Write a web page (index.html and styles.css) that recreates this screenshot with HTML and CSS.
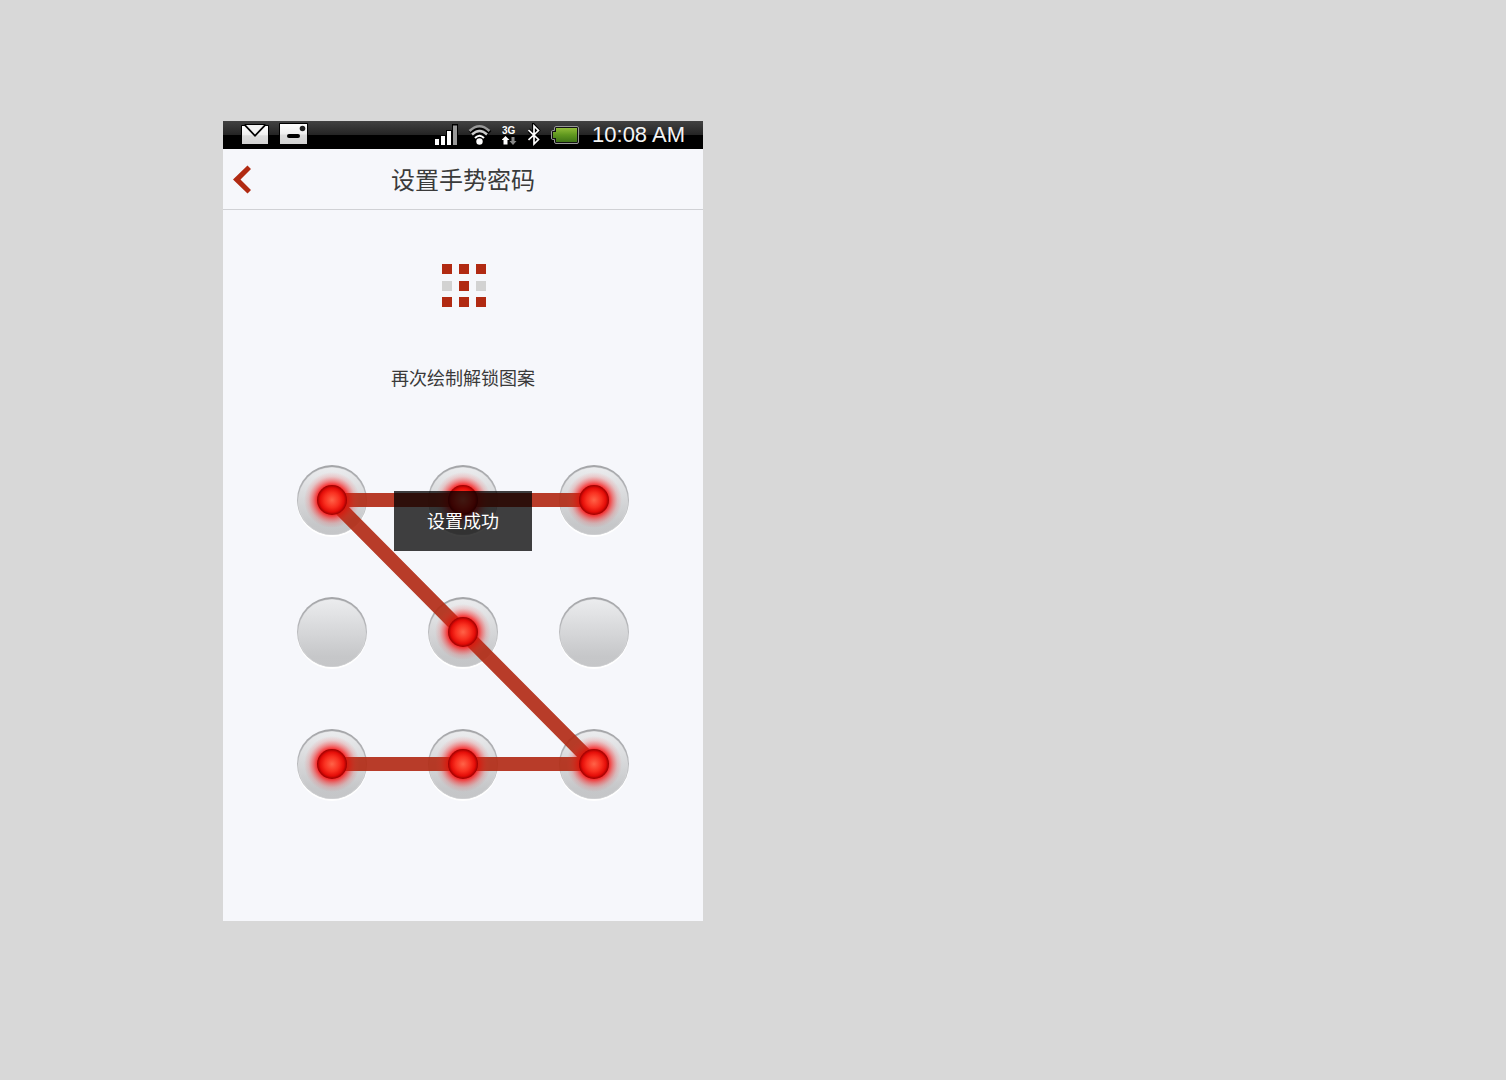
FILE: index.html
```html
<!DOCTYPE html>
<html lang="zh-CN">
<head>
<meta charset="utf-8">
<meta name="viewport" content="width=device-width, initial-scale=1">
<title>设置手势密码</title>
<link rel="stylesheet" href="styles.css">
</head>
<body>
<div class="phone">
  <div class="status">
    <div class="status-group status-left">
      <svg width="28" height="22" viewBox="0 0 28 22" aria-hidden="true">
        <defs>
          <linearGradient id="paper" x1="0" y1="0" x2="0" y2="1">
            <stop offset="0" stop-color="#fff"/><stop offset=".52" stop-color="#eee"/>
            <stop offset=".53" stop-color="#ddd"/><stop offset="1" stop-color="#d2d2d2"/>
          </linearGradient>
        </defs>
        <rect x="0" y="2" width="28" height="20" rx="1" fill="#000"/>
        <rect x="1" y="3" width="26" height="18" fill="url(#paper)"/>
        <path d="M3.500 1H24.500V3L14 14L3.500 3Z" fill="#000"/>
        <path d="M5 2H23L14 11.500Z" fill="#f4f4f4"/>
      </svg>
      <svg width="29" height="22" viewBox="0 0 29 22" aria-hidden="true">
        <rect width="29" height="22" rx="1" fill="#000"/>
        <rect x="1" y="1" width="27" height="20" fill="url(#paper)"/>
        <rect x="8" y="11" width="13" height="4" rx="2" fill="#000"/>
        <circle cx="23.500" cy="5.500" r="2.800" fill="#222"/>
      </svg>
    </div>
    <div class="status-group">
      <svg width="24" height="22" viewBox="0 0 24 22" aria-hidden="true">
        <path d="M0 14H6V11H12V6H18V0H24V22H0Z" fill="#000"/>
        <path d="M1 15H5V21H1ZM7 12H11V21H7ZM13 7H17V21H13Z" fill="#fff"/>
        <path d="M19 1.500H23V21H19Z" fill="#999"/>
      </svg>
      <svg class="wifi" width="24" height="22" viewBox="0 0 24 22" fill="none" aria-hidden="true">
        <path d="M2 8.500Q12 -1.500 22 8.500M5 12Q12 4.500 19 12M8 15Q12 11 16 15" stroke="#000" stroke-width="4"/>
        <path d="M1.500 7Q11.500 -2.500 21.500 7" stroke="#999" stroke-width="2.500"/>
        <path d="M4 10.500Q11.500 3.500 19 10.500" stroke="#ccc" stroke-width="2.400"/>
        <path d="M7 14Q11.500 9.500 16 14" stroke="#fff" stroke-width="2"/>
        <circle cx="11.500" cy="17.500" r="3.200" fill="#fff"/>
      </svg>
      <svg class="mobile-data" width="16" height="22" viewBox="0 0 16 22" role="img" aria-label="3G">
        <text class="network" x="0" y="10">3G</text>
        <path d="M3.500 12L7.500 16H5.500V20.500H1.500V16H-.5Z" fill="#fff"/>
        <path d="M9.500 13H12.500V17H14.500L11 21L7.500 17H9.500Z" fill="#888"/>
      </svg>
      <svg class="bluetooth" width="13" height="24" viewBox="1 0 13 24" fill="none" aria-hidden="true">
        <path d="M1.500 7L11 16.500L7 21V3L11 7.500L1.500 17" stroke="#000" stroke-width="4"/>
        <path d="M1.500 7L11.500 16.500L7 21V3L11.500 7.500L1.500 17" stroke="#fff" stroke-width="1.700"/>
      </svg>
      <svg class="battery" width="29" height="20" viewBox="0 0 29 20" aria-hidden="true">
        <defs>
          <linearGradient id="charge" x1="0" y1="0" x2="0" y2="1">
            <stop offset="0" stop-color="#90bc38"/><stop offset=".5" stop-color="#5f971f"/><stop offset="1" stop-color="#3f7416"/>
          </linearGradient>
        </defs>
        <path d="M5 1.500H26Q27.500 1.500 27.500 3V17Q27.500 18.500 26 18.500H5Q3.500 18.500 3.500 17V14.500H1.500Q.5 14.500 .5 13V7Q.5 5.500 1.500 5.500H3.500V3Q3.500 1.500 5 1.500Z" fill="#111" stroke="#999"/>
        <path d="M5 3H26V17H5V13H2V7H5Z" fill="url(#charge)"/>
      </svg>
      <time class="clock">10:08 AM</time>
    </div>
  </div>

  <header class="header">
    <button class="back" type="button" aria-label="返回">
      <svg width="18" height="30" viewBox="0 0 18 30" aria-hidden="true">
        <path d="M14.500 .5L18 4L7.500 14.500L18 25L14.500 28.500L0 14.500Z" fill="#b12a12"/>
      </svg>
    </button>
    <h1 class="title">设置手势密码</h1>
  </header>

  <main class="content">
    <svg class="preview" width="46" height="43" viewBox="0 0 46 43" aria-hidden="true">
      <path d="M2 0h10v10H2zM19 0h10v10H19zM36 0h10v10H36zM19 17h10v10H19zM2 33h10v10H2zM19 33h10v10H19zM36 33h10v10H36z" fill="#b12a12"/>
      <path d="M2 17h10v10H2zM36 17h10v10H36z" fill="#d2d2d2"/>
    </svg>
    <p class="hint">再次绘制解锁图案</p>
    <svg class="pattern" viewBox="0 0 352 344" role="img" aria-label="解锁图案">
      <defs>
        <linearGradient id="disc" x1="0" y1="0" x2="0" y2="1">
          <stop offset="0" stop-color="#ebecee"/><stop offset=".85" stop-color="#c6c7c9"/><stop offset="1" stop-color="#c5c6c8"/>
        </linearGradient>
        <linearGradient id="rim" x1="0" y1="0" x2="0" y2="1">
          <stop offset="0" stop-color="#a4a5a8"/><stop offset=".5" stop-color="#b9babd"/><stop offset="1" stop-color="#c8c9cb"/>
        </linearGradient>
        <radialGradient id="glow">
          <stop offset="0" stop-color="#f00"/><stop offset=".53" stop-color="#f00" stop-opacity=".8"/>
          <stop offset=".68" stop-color="#f11" stop-opacity=".45"/><stop offset=".84" stop-color="#f33" stop-opacity=".16"/>
          <stop offset="1" stop-color="#f44" stop-opacity="0"/>
        </radialGradient>
        <radialGradient id="core">
          <stop offset="0" stop-color="#ff6348"/><stop offset=".5" stop-color="#f93020"/>
          <stop offset=".8" stop-color="#e40d08"/><stop offset="1" stop-color="#900"/>
        </radialGradient>
        <g id="button">
          <circle cy="2" r="35" fill="#fff"/>
          <circle r="35" fill="url(#rim)"/>
          <circle cy="1" r="34" fill="#d5d6d8"/>
          <circle cy="1" r="33.500" fill="url(#disc)"/>
        </g>
        <circle id="halo" r="28" fill="url(#glow)"/>
        <circle id="dot" r="15" fill="url(#core)"/>
      </defs>
      <use href="#button" x="45" y="40"/><use href="#button" x="176" y="40"/><use href="#button" x="307" y="40"/>
      <use href="#button" x="45" y="172"/><use href="#button" x="176" y="172"/><use href="#button" x="307" y="172"/>
      <use href="#button" x="45" y="304"/><use href="#button" x="176" y="304"/><use href="#button" x="307" y="304"/>
      <path class="trace" d="M307 40H45L307 304H45"/>
      <use href="#halo" x="45" y="40"/><use href="#halo" x="176" y="40"/><use href="#halo" x="307" y="40"/>
      <use href="#halo" x="176" y="172"/>
      <use href="#halo" x="45" y="304"/><use href="#halo" x="176" y="304"/><use href="#halo" x="307" y="304"/>
      <path class="trace trace-over" d="M307 40H45L307 304H45"/>
      <use href="#dot" x="45" y="40"/><use href="#dot" x="176" y="40"/><use href="#dot" x="307" y="40"/>
      <use href="#dot" x="176" y="172"/>
      <use href="#dot" x="45" y="304"/><use href="#dot" x="176" y="304"/><use href="#dot" x="307" y="304"/>
    </svg>
  </main>

  <div class="toast" role="status">设置成功</div>
</div>
</body>
</html>
```
FILE: styles.css
```css
* {
  box-sizing: border-box;
}

body {
  margin: 0;
  padding: 121px 16px 121px 223px;
  background: #d8d8d8;
  color: #3a3a3a;
  font-family: "Noto Sans CJK SC", sans-serif;
}

.phone {
  position: relative;
  max-width: 480px;
  min-height: 800px;
  background: #f6f7fb;
}

.status {
  display: flex;
  justify-content: space-between;
  height: 28px;
  padding: 0 18px;
  background: linear-gradient(#424242, #242424 50%, #000 50%);
}

.status-group {
  display: flex;
  align-items: center;
  gap: 10px;
}

.status-left {
  padding-bottom: 2px;
}

.network {
  fill: #fff;
  font: bold 10px "Liberation Sans", sans-serif;
}

.clock {
  margin-left: 2px;
  color: #f4f4f4;
  font: 22px/28px "Liberation Sans", sans-serif;
}

.header {
  display: grid;
  grid-template-columns: 38px 1fr 38px;
  align-items: center;
  height: 61px;
  border-bottom: 1px solid #d0d1d5;
}

.back {
  display: flex;
  padding: 1px 10px 0;
  border: 0;
  background: none;
  cursor: pointer;
}

.title {
  margin: 0;
  font-size: 24px;
  font-weight: 400;
  line-height: 60px;
  text-align: center;
}

.content {
  display: flex;
  flex-direction: column;
  align-items: center;
  padding-top: 54px;
}

.hint {
  margin: 56px 0 69px;
  font-size: 18px;
  line-height: 28px;
}

.pattern {
  width: 100%;
  max-width: 352px;
}

.trace {
  fill: none;
  stroke: #b12a14;
  stroke-width: 14;
  stroke-linejoin: round;
  opacity: .85;
}

.trace-over {
  opacity: .4;
}

.toast {
  position: absolute;
  inset: 0;
  width: 138px;
  height: 60px;
  margin: auto;
  background: rgba(0, 0, 0, .75);
  color: #fff;
  font-size: 18px;
  line-height: 58px;
  text-align: center;
}
```
